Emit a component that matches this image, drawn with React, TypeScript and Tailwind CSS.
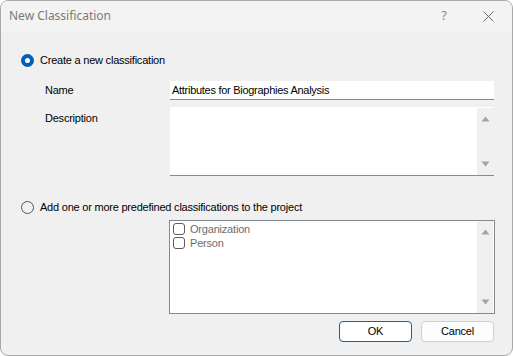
import React from "react";

const ui = { fontFamily: '"Liberation Sans", Arial, sans-serif' };
const title = { fontFamily: '"Noto Sans", "Open Sans", sans-serif' };

function UpArrow() {
  return (
    <svg width="9" height="6" viewBox="0 0 9 6">
      <path d="M4.5 0.5 L8.5 5.5 L0.5 5.5 Z" fill="#a3a3a3" />
    </svg>
  );
}
function DownArrow() {
  return (
    <svg width="9" height="6" viewBox="0 0 9 6">
      <path d="M0.5 0.5 L8.5 0.5 L4.5 5.5 Z" fill="#a3a3a3" />
    </svg>
  );
}

function Check({ label }: { label: string }) {
  return (
    <div className="flex items-center h-[14px]">
      <div className="w-[12px] h-[12px] rounded-[3px] border border-[#5c5c5c] bg-white ml-[3px]" />
      <span className="ml-[5px] text-[11px] tracking-[-0.2px] leading-[14px] text-[#6d6d6d]">{label}</span>
    </div>
  );
}

export default function App() {
  return (
    <div className="w-[513px] h-[356px] bg-white">
      <div
        className="w-[513px] h-[356px] rounded-[8px] border border-[#a9a9a9] bg-[#f0f0f0] overflow-hidden flex flex-col"
        style={ui}
      >
        <div className="h-[30px] bg-[#f3f3f3] flex items-center shrink-0" style={title}>
          <span className="ml-[8px] text-[12px] text-[#7a7a7a]">New Classification</span>
          <span className="ml-auto mr-[36px] text-[13px] text-[#8a8a8a]">?</span>
          <svg className="mr-[18px]" width="11" height="11" viewBox="0 0 11 11">
            <path d="M0.5 0.5 L10.5 10.5 M10.5 0.5 L0.5 10.5" stroke="#6a6a6a" strokeWidth="1" />
          </svg>
        </div>

        <div className="flex flex-col pl-[20px] pr-[17px] text-[11px] tracking-[-0.22px]">
          <div className="flex items-center mt-[23px] h-[13px]">
            <div className="w-[13px] h-[13px] rounded-full bg-[#005fb8] flex items-center justify-center">
              <div className="w-[5px] h-[5px] rounded-full bg-white" />
            </div>
            <span className="ml-[6px] text-black">Create a new classification</span>
          </div>

          <div className="flex items-center mt-[14px]">
            <span className="w-[125px] ml-[24px] text-black">Name</span>
            <div className="w-[324px] h-[19px] bg-white border-b border-[#8a8a8a] flex items-center">
              <span className="ml-[2px] text-black tracking-[-0.28px]">Attributes for Biographies Analysis</span>
            </div>
          </div>

          <div className="flex mt-[7px]">
            <span className="w-[125px] ml-[24px] mt-[3px] text-black">Description</span>
            <div className="w-[324px] h-[69px] bg-white border-b border-[#8a8a8a] flex justify-end">
              <div className="w-[17px] h-[67px] mt-[1px] bg-[#f0f0f0] flex flex-col items-center justify-between py-[8px]">
                <UpArrow />
                <DownArrow />
              </div>
            </div>
          </div>

          <div className="flex items-center mt-[25px] h-[13px]">
            <div className="w-[13px] h-[13px] rounded-full border border-[#555] bg-[#f0f0f0]" />
            <span className="ml-[6px] text-black">Add one or more predefined classifications to the project</span>
          </div>

          <div className="flex mt-[6px]">
            <div className="ml-[148px] w-[326px] h-[94px] bg-white border border-[#828790] flex">
              <div className="flex-1 flex flex-col pt-[1px]">
                <Check label="Organization" />
                <Check label="Person" />
              </div>
              <div className="w-[16px] h-[92px] bg-[#f0f0f0] flex flex-col items-center justify-between py-[8px] mr-[1px]">
                <UpArrow />
                <DownArrow />
              </div>
            </div>
          </div>

          <div className="flex justify-end mt-[7px] pr-[1px] gap-[9px]">
            <div className="w-[73px] h-[21px] rounded-[4px] border border-[#0067c0] bg-white flex items-center justify-center text-black">
              OK
            </div>
            <div className="w-[73px] h-[21px] rounded-[4px] border border-[#d0d0d0] bg-[#fdfdfd] flex items-center justify-center text-black">
              Cancel
            </div>
          </div>
        </div>
      </div>
    </div>
  );
}
